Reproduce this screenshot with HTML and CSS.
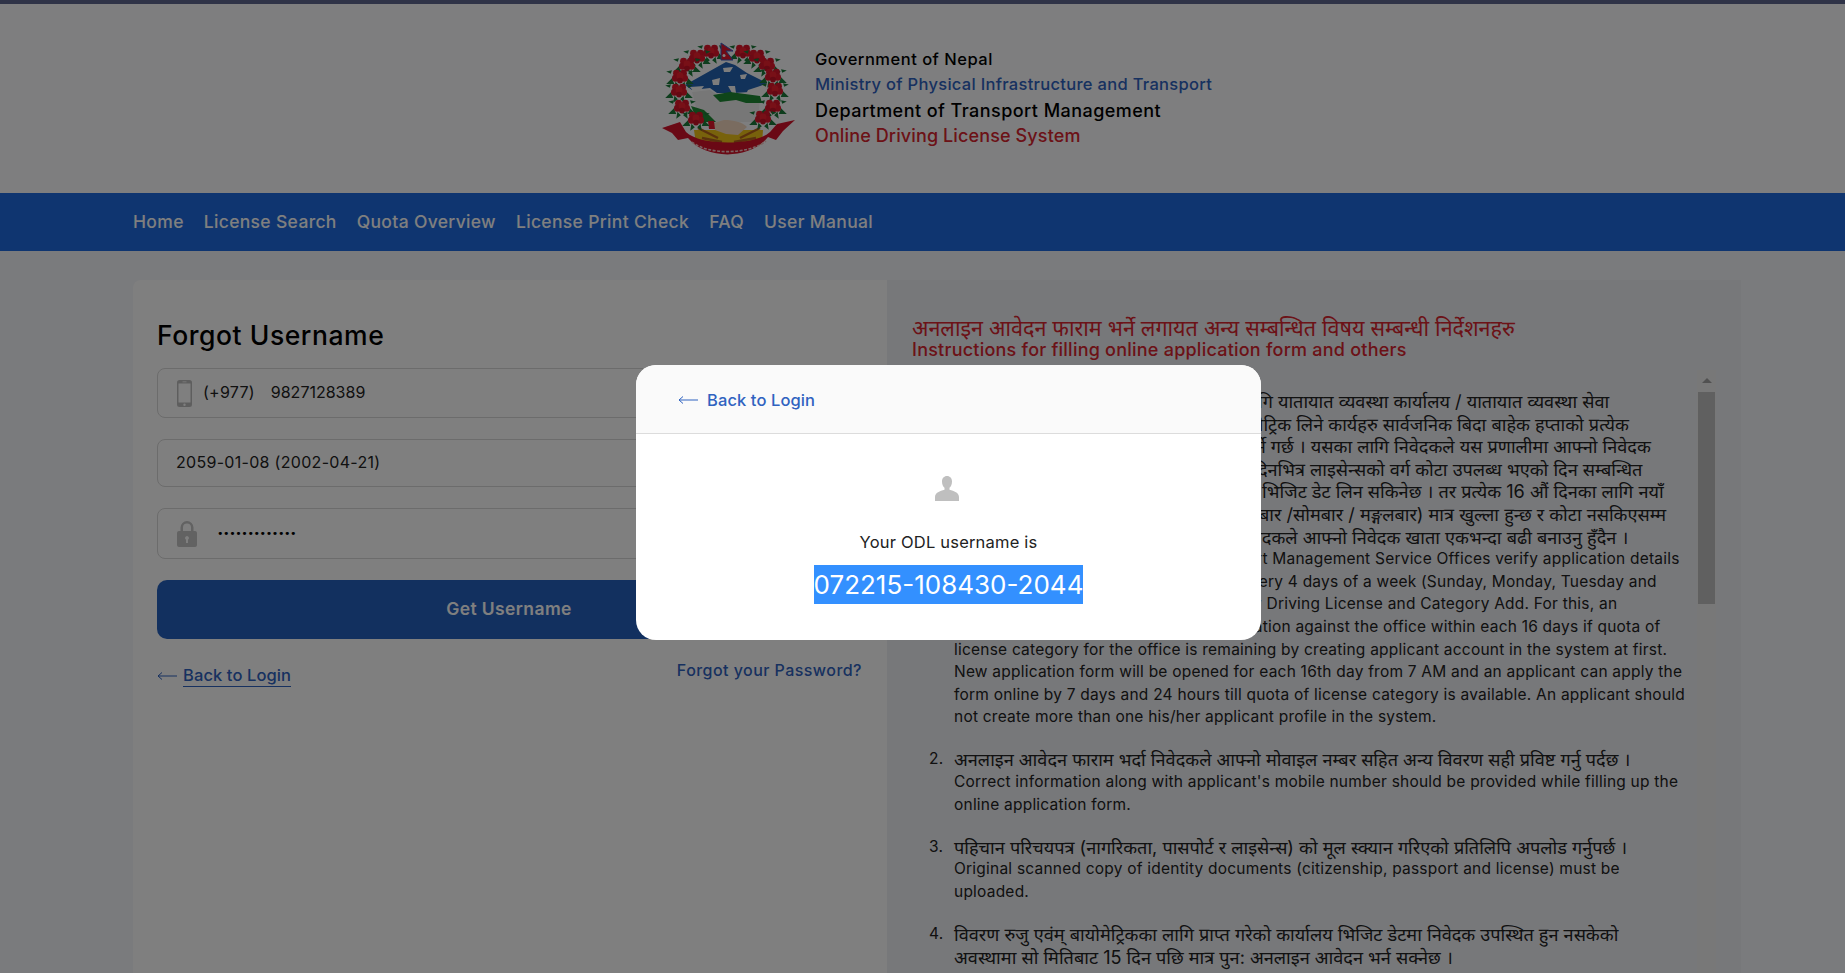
FILE: index.html
```html
<!DOCTYPE html>
<html lang="en">
<head>
<meta charset="utf-8">
<title>Online Driving License System</title>
<link rel="stylesheet" href="styles.css">
</head>
<body>
<header class="site-header">
  <svg class="emblem" viewBox="10 12 138 116" aria-hidden="true">
    <defs>
      <g id="fl" transform="scale(1.15)">
        <path d="M-7 2 L-12 7 L-5 7Z M7 2 L12 7 L5 7Z M-4 5 L-5 11 L-1 8Z M4 5 L5 11 L1 8Z M-8 -2 L-12 -4 L-7 -5Z M8 -2 L12 -4 L7 -5Z" fill="#1c7a3a"/>
        <circle cx="-3" cy="-2.500" r="3" fill="#e3172a"/><circle cx="3" cy="-2.500" r="3" fill="#d8142a"/>
        <circle cx="-4" cy="2" r="3" fill="#d8142a"/><circle cx="4" cy="2" r="3" fill="#e3172a"/>
        <circle cx="0" cy="0" r="3" fill="#f0202f"/><circle cx="0" cy="4" r="2.500" fill="#c81226"/>
      </g>
    </defs>
    <path d="M76 32 L35 55 L42 60 L60 58 L67 63 L83 63 L100 62 L117 53 L97 43 L85 35Z" fill="#2465b4"/>
    <path d="M73 38 L83 37 L80 42 L74 42Z M62 50 L70 48 L69 55 L63 55Z M90 45 L97 44 L95 49 L91 49Z M78 56 L85 56 L86 63 L82 63Z M98 60 L116 54 L116 64 L96 64Z M40 57 L54 56 L50 61 L43 61Z" fill="#fbfbfb"/>
    <path d="M42 62 L60 60 L68 66 L110 68 L108 92 L50 92Z" fill="#efefef"/>
    <path d="M63 65 L80 62 L110 66 L112 73 L96 73 L86 70 L70 72Z" fill="#1e8a34"/>
    <path d="M41 76 L54 80 L62 88 L66 92 L48 92Z" fill="#1e8a34"/>
    <path d="M44 100 L113 100 L112 114 L78 120 L46 114Z" fill="#f0c419"/>
    <path d="M64 93 L74 90 C84 90 92 92 97 97 L88 105 L76 104 L65 100Z" fill="#f5d8c0"/>
    <path d="M58 91 L64 91 L65 99 L59 99Z" fill="#e3172a"/>
    <path d="M48 98 L68 108 M52 108 L72 112 M110 98 L90 108 M106 108 L84 112" stroke="#b5651d" stroke-width="2.500" fill="none"/>
    <path d="M12 98 L30 92 L36 102 C50 116 105 116 120 102 L127 94 L145 90 L133 101 L126 110 L118 107 C100 130 56 130 38 108 L28 110 L22 103Z" fill="#d4122a"/>
    <path d="M42 112 C58 125 98 125 116 111" stroke="#f3c6c6" stroke-width="1.600" stroke-dasharray="3 1.500" fill="none"/>
    <use href="#fl" x="61" y="21"/><use href="#fl" x="47" y="26"/><use href="#fl" x="37" y="34"/>
    <use href="#fl" x="30" y="46"/><use href="#fl" x="29" y="60"/><use href="#fl" x="32" y="76"/><use href="#fl" x="46" y="88"/>
    <use href="#fl" x="93" y="21"/><use href="#fl" x="107" y="26"/><use href="#fl" x="117" y="34"/>
    <use href="#fl" x="123" y="45"/><use href="#fl" x="125" y="59"/><use href="#fl" x="123" y="76"/><use href="#fl" x="113" y="87"/>
    <path d="M71 13 L83 21 L76 21 L83 30 L71 30Z" fill="#e0162e" stroke="#3a5fc0" stroke-width="1"/>
    <circle cx="74" cy="25.500" r="1.500" fill="#fff"/>
  </svg>
  <div class="org">
    <div class="org-gov">Government of Nepal</div>
    <div class="org-min">Ministry of Physical Infrastructure and Transport</div>
    <div class="org-dep">Department of Transport Management</div>
    <div class="org-sys">Online Driving License System</div>
  </div>
</header>

<nav class="main-nav">
  <a>Home</a><a>License Search</a><a>Quota Overview</a><a>License Print Check</a><a>FAQ</a><a>User Manual</a>
</nav>

<main class="content">
  <section class="form-panel">
    <h1 class="form-title">Forgot Username</h1>
    <div class="field field-phone">
      <svg class="icon-phone" viewBox="0 0 15 27" aria-hidden="true"><path d="M2.500 0h10A2.500 2.500 0 0 1 15 2.500v22a2.500 2.500 0 0 1-2.500 2.500h-10A2.500 2.500 0 0 1 0 24.500v-22A2.500 2.500 0 0 1 2.500 0ZM1.500 3.500v19h12v-19ZM5.500 1.500v.800h4v-.800ZM7.500 23.500a1.200 1.200 0 1 0 0 2.400 1.200 1.200 0 0 0 0-2.400Z" fill="#bdbdbd" fill-rule="evenodd"/></svg>
      <span class="code">(+977)</span><span>9827128389</span>
    </div>
    <div class="field field-date">2059-01-08 (2002-04-21)</div>
    <div class="field field-captcha">
      <svg class="icon-lock" viewBox="0 0 20 26" aria-hidden="true"><path d="M2 10h1.500V6.500a6.500 6.500 0 0 1 13 0V10H18a2 2 0 0 1 2 2v12a2 2 0 0 1-2 2H2a2 2 0 0 1-2-2V12a2 2 0 0 1 2-2ZM6 10h8V6.500a4 4 0 0 0-8 0ZM10 15a2 2 0 0 0-1 3.700V22h2v-3.300A2 2 0 0 0 10 15Z" fill="#c4c4c4" fill-rule="evenodd"/></svg>
      <span class="dots">•••••••••••••</span>
    </div>
    <div class="submit">Get Username</div>
    <div class="form-links">
      <div class="back">
        <svg class="arrow" viewBox="0 0 20 10" aria-hidden="true"><path d="M20 5H1M5 1.500 1 5l4 3.500" fill="none" stroke="currentColor" stroke-width="1"/></svg>
        <a>Back to Login</a>
      </div>
      <a class="forgot">Forgot your Password?</a>
    </div>
  </section>

  <section class="info-panel">
    <h2 class="info-title"><span class="ne-title">अनलाइन आवेदन फाराम भर्ने लगायत अन्य सम्बन्धित विषय सम्बन्धी निर्देशनहरु</span><span class="en-title">Instructions for filling online application form and others</span></h2>
    <div class="info-body">
      <ol class="info-list">
        <li>
          <span class="ne">नयाँ सवारी चालक अनुमतिपत्र र वर्ग थप गर्न लागि यातायात व्यवस्था कार्यालय / यातायात व्यवस्था सेवा</span>
          <span class="ne">सो कार्यालयहरूले आवेदन प्रमाणीकरण र बायोमेट्रिक लिने कार्यहरु सार्वजनिक बिदा बाहेक हप्ताको प्रत्येक</span>
          <span class="ne">आइतबार, सोमबार, मंगलबार र बिहीबार मात्र गर्ने गर्छ । यसका लागि निवेदकले यस प्रणालीमा आफ्नो निवेदक</span>
          <span class="ne">खाता बनाई सवारी वर्ग थपको लागि प्रत्येक 16 दिनभित्र लाइसेन्सको वर्ग कोटा उपलब्ध भएको दिन सम्बन्धित</span>
          <span class="ne">सम्बन्धित कार्यालयको छनौट गरी अनलाइन रूप भिजिट डेट लिन सकिनेछ । तर प्रत्येक 16 औं दिनका लागि नयाँ</span>
          <span class="ne">आवेदन फाराम बिहान ७ बजेदेखि ७ दिन (आइतबार /सोमबार / मङ्गलबार) मात्र खुल्ला हुन्छ र कोटा नसकिएसम्म</span>
          <span class="ne">वर्ग कोटा २४ सै घण्टा नै खुल्ला रहन्छ । एक निवेदकले आफ्नो निवेदक खाता एकभन्दा बढी बनाउनु हुँदैन ।</span>
          <span>All of the Transport Offices and Transport Management Service Offices verify application details</span>
          <span>and do take applicant's biometrics on every 4 days of a week (Sunday, Monday, Tuesday and</span>
          <span>Thursday) except on all holidays for New Driving License and Category Add. For this, an</span>
          <span>applicant can take a visit date for application against the office within each 16 days if quota of</span>
          <span>license category for the office is remaining by creating applicant account in the system at first.</span>
          <span>New application form will be opened for each 16th day from 7 AM and an applicant can apply the</span>
          <span>form online by 7 days and 24 hours till quota of license category is available. An applicant should</span>
          <span>not create more than one his/her applicant profile in the system.</span>
        </li>
        <li>
          <span class="ne">अनलाइन आवेदन फाराम भर्दा निवेदकले आफ्नो मोवाइल नम्बर सहित अन्य विवरण सही प्रविष्ट गर्नु पर्दछ ।</span>
          <span>Correct information along with applicant's mobile number should be provided while filling up the</span>
          <span>online application form.</span>
        </li>
        <li>
          <span class="ne">पहिचान परिचयपत्र (नागरिकता, पासपोर्ट र लाइसेन्स) को मूल स्क्यान गरिएको प्रतिलिपि अपलोड गर्नुपर्छ ।</span>
          <span>Original scanned copy of identity documents (citizenship, passport and license) must be</span>
          <span>uploaded.</span>
        </li>
        <li>
          <span class="ne">विवरण रुजु एवंम् बायोमेट्रिकका लागि प्राप्त गरेको कार्यालय भिजिट डेटमा निवेदक उपस्थित हुन नसकेको</span>
          <span class="ne">अवस्थामा सो मितिबाट 15 दिन पछि मात्र पुन: अनलाइन आवेदन भर्न सक्नेछ ।</span>
        </li>
      </ol>
      <div class="scrollbar">
        <div class="scroll-up"></div>
        <div class="scroll-thumb"></div>
      </div>
    </div>
  </section>
</main>

<div class="overlay">
  <div class="modal" role="dialog">
    <div class="modal-head">
      <svg class="arrow" viewBox="0 0 20 10" aria-hidden="true"><path d="M20 5H1M5 1.500 1 5l4 3.500" fill="none" stroke="currentColor" stroke-width="1"/></svg>
      <a>Back to Login</a>
    </div>
    <div class="modal-body">
      <svg class="icon-user" viewBox="0 0 24 25" aria-hidden="true"><path d="M12 0c3 0 5 2.300 5 5.500 0 2.700-1 5-2.500 6.300v1.900C19 15 24 16.500 24 21v4H0v-4c0-4.500 5-6 9.500-7.300v-1.900C8 10.500 7 8.200 7 5.500 7 2.300 9 0 12 0Z" fill="#bfbfbf"/></svg>
      <p class="modal-label">Your ODL username is</p>
      <p class="modal-value"><span>072215-108430-2044</span></p>
    </div>
  </div>
</div>
</body>
</html>
```

FILE: styles.css
```css
* { box-sizing: border-box; }
html, body { height: 100%; }
body {
  margin: 0;
  overflow: hidden;
  background: #f5f6fa;
  color: #222;
  font-family: Inter, "Noto Sans Devanagari", "Noto Sans", "Open Sans", sans-serif;
  border-top: 4px solid #5e668e;
}
a { color: inherit; }

.site-header {
  height: 189px;
  display: flex;
  align-items: center;
  gap: 17px;
  padding-left: 660px;
  background: #fcfdff;
}
.emblem { width: 138px; height: 116px; margin-top: 3px; flex: none; }
.org { font-weight: 500; margin-top: -2px; }
.org > div { height: 25.500px; line-height: 25.500px; white-space: nowrap; }
.org-gov { color: #000; font-size: 16.500px; letter-spacing: 0.5px; }
.org-min { color: #2f62c0; font-size: 16.500px; letter-spacing: 0.3px; }
.org-dep { color: #000; font-size: 18px; letter-spacing: 0.45px; }
.org-sys { color: #d8242e; font-size: 18px; letter-spacing: 0.12px; }

.main-nav {
  height: 58px;
  padding: 0 0 2px 133px;
  display: flex;
  align-items: center;
  gap: 20px;
  background: #1e6ae0;
  color: #fff;
  font-size: 17.500px;
  letter-spacing: 0.33px;
  font-weight: 500;
}

.content {
  width: 1608px;
  margin-left: 133px;
  margin-top: 29px;
  display: grid;
  grid-template-columns: 754px 854px;
  height: 800px;
}

.form-panel {
  background: #fff;
  border-radius: 8px 0 0 0;
  padding: 36px 26px 0 24px;
}
.form-title {
  margin: 0 0 14px;
  font-size: 26.500px;
  letter-spacing: 0.55px;
  font-weight: 500;
  line-height: 38px;
  color: #000;
}
.field {
  height: 49px;
  margin-bottom: 21px;
  padding-bottom: 2px;
  border: 1px solid #d8d8d8;
  border-radius: 8px;
  display: flex;
  align-items: center;
  font-size: 16px;
  color: #222;
}
.field-phone { height: 50px; padding-left: 19px; }
.field-phone .code { margin: 0 16px 0 11px; letter-spacing: 0.25px; }
.field-date { height: 48px; padding-left: 18px; letter-spacing: 0.3px; }
.field-captcha { height: 51px; padding-left: 19px; }
.icon-phone { width: 15px; height: 27px; margin-top: 2px; }
.icon-lock { width: 20px; height: 26px; margin-top: 2px; }
.dots { margin: 2px 0 0 20px; font-size: 11px; letter-spacing: -0.4px; color: #000; font-family: "DejaVu Sans", sans-serif; }

.submit {
  height: 59px;
  padding-bottom: 3px;
  border-radius: 10px;
  background: #2560bf;
  color: #fff;
  display: flex;
  align-items: center;
  justify-content: center;
  font-size: 17.500px;
  letter-spacing: 0.4px;
  font-weight: 600;
}
.form-links {
  margin-top: 21px;
  display: flex;
  justify-content: space-between;
  align-items: flex-start;
  font-weight: 500;
  color: #2f62c0;
}
.back { display: flex; align-items: center; gap: 6px; margin-top: 5px; font-size: 16.500px; letter-spacing: 0.1px; }
.back a { border-bottom: 1px solid #2f62c0; padding-bottom: 1px; }
.arrow { width: 20px; height: 10px; flex: none; }
.forgot { font-size: 16px; letter-spacing: 0.45px; margin-right: -1px; }

.info-panel {
  background: #eff0f5;
  padding: 37px 0 0 25px;
  display: flex;
  flex-direction: column;
}
.info-title {
  margin: 0 0 9px;
  display: flex;
  flex-direction: column;
  line-height: 22px;
  color: #d8242e;
}
.ne-title { font-size: 21.500px; font-weight: 400; }
.en-title { font-size: 18px; letter-spacing: 0.23px; font-weight: 450; }
.info-body { display: flex; height: 640px; padding-right: 25px; }
.info-list {
  flex: 1;
  min-width: 0;
  margin: 0;
  padding: 20px 0 0 17px;
  font-size: 15.500px;
  letter-spacing: 0.22px;
  line-height: 22.600px;
  color: #222;
  list-style: none;
  counter-reset: item;
}
.info-list li {
  display: grid;
  grid-template-columns: 25px 1fr;
  margin-bottom: 19.500px;
  counter-increment: item;
}
.info-list li::before { content: counter(item) "."; grid-column: 1; grid-row: 1; }
.info-list span { grid-column: 2; white-space: nowrap; }
.info-list .ne { font-size: 18.100px; letter-spacing: 0; }

.scrollbar { width: 19px; height: 100%; background: #f1f1f1; flex: none; display: flex; flex-direction: column; }
.scroll-up { height: 22px; position: relative; }
.scroll-up::after {
  content: "";
  position: absolute;
  left: 5px;
  top: 8px;
  border: 5px solid transparent;
  border-top: 0;
  border-bottom-color: #a3a3a3;
}
.scroll-thumb { height: 212px; margin: 0 1px; background: #c1c1c1; }

.overlay {
  position: fixed;
  inset: 0;
  background: rgba(0, 0, 0, 0.5);
  padding: 365px 0 0 636px;
}
.modal {
  width: 625px;
  height: 275px;
  border-radius: 20px;
  background: #fff;
  overflow: hidden;
}
.modal-head {
  height: 69px;
  padding: 2px 0 0 42px;
  display: flex;
  align-items: center;
  gap: 9px;
  background: #fafafa;
  border-bottom: 1px solid #dcdcdc;
  color: #2f62c0;
  font-size: 16.500px;
  letter-spacing: 0.1px;
  font-weight: 500;
}
.modal-body { display: flex; flex-direction: column; align-items: center; padding-top: 42px; }
.icon-user { width: 24px; height: 25px; margin-right: 4px; }
.modal-label { margin: 30px 0 0; font-size: 16.500px; letter-spacing: 0.2px; line-height: 22px; color: #222; }
.modal-value { margin: 12px 0 0; font-size: 26px; line-height: 39px; }
.modal-value span { display: block; background: #3390ff; color: #fff; }
```
